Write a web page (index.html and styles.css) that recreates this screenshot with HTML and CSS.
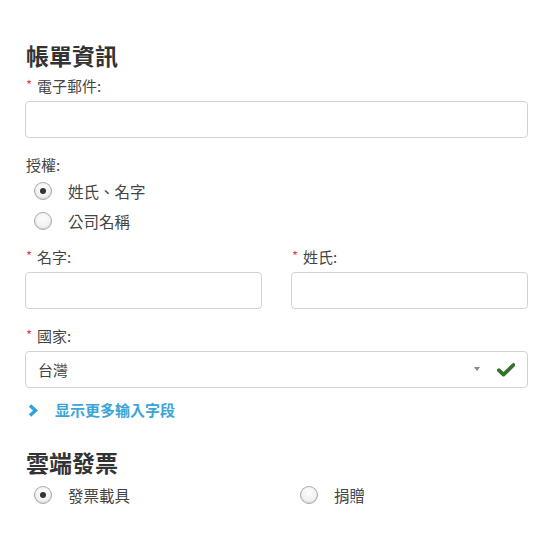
FILE: index.html
```html
<!DOCTYPE html>
<html lang="zh-Hant">
<head>
<meta charset="utf-8">
<link rel="stylesheet" href="styles.css">
</head>
<body>
<form class="checkout">
  <h2 class="section-title title-billing">帳單資訊</h2>
  <div class="field">
    <label class="field-label"><span class="req">*</span>電子郵件:</label>
    <div class="text-input"></div>
  </div>

  <div class="field field-auth">
    <div class="field-label">授權:</div>
    <div class="radio-row"><span class="radio checked"></span><span class="radio-text">姓氏、名字</span></div>
    <div class="radio-row"><span class="radio"></span><span class="radio-text">公司名稱</span></div>
  </div>

  <div class="two-col names">
    <div class="field">
      <label class="field-label"><span class="req">*</span>名字:</label>
      <div class="text-input"></div>
    </div>
    <div class="field">
      <label class="field-label"><span class="req">*</span>姓氏:</label>
      <div class="text-input"></div>
    </div>
  </div>

  <div class="field field-country">
    <label class="field-label"><span class="req">*</span>國家:</label>
    <div class="text-input select">
      <span class="select-value">台灣</span>
      <span class="caret"></span>
      <svg class="check" width="18" height="14" viewBox="0 0 18 14"><path d="M1.8 7.2 L6.5 11.6 L16.4 2" fill="none" stroke="#37702a" stroke-width="3.8" stroke-linecap="round" stroke-linejoin="round"/></svg>
    </div>
  </div>

  <a class="more-link">
    <svg class="chev" width="10" height="13" viewBox="0 0 10 13"><path d="M2 1.5 L7.5 6.5 L2 11.5" fill="none" stroke="#2ea3d8" stroke-width="3.4"/></svg>
    <span>显示更多输入字段</span>
  </a>

  <h2 class="section-title title-invoice">雲端發票</h2>
  <div class="two-col invoice">
    <div class="radio-row"><span class="radio checked"></span><span class="radio-text">發票載具</span></div>
    <div class="radio-row"><span class="radio"></span><span class="radio-text">捐贈</span></div>
  </div>
</form>
</body>
</html>
```
FILE: styles.css
```css
* { box-sizing: border-box; }
html, body { margin: 0; padding: 0; background: #fff; }
body {
  font-family: "Noto Sans CJK TC", "Noto Sans", sans-serif;
  color: #444;
  font-size: 15px;
}
.checkout {
  width: 550px;
  padding: 0 22px 40px 25px;
  display: flex;
  flex-direction: column;
}
.section-title {
  margin: 0;
  font-size: 23px;
  line-height: 30px;
  font-weight: 700;
  color: #333;
  padding-left: 1px;
}
.title-billing { margin-top: 40px; }
.title-invoice { margin-top: 27px; }

.field { display: flex; flex-direction: column; }
.title-billing + .field { margin-top: 6px; }
.field-label {
  display: block;
  line-height: 20px;
  font-size: 15px;
  color: #444;
  padding-left: 1px;
}
.req {
  color: #e8434a;
  font-size: 13px;
  margin-right: 5px;
  vertical-align: top;
  position: relative;
  top: -1px;
}
.text-input {
  margin-top: 5px;
  height: 37px;
  border: 1px solid #d2d2d2;
  border-radius: 4px;
  background: #fff;
}
.field-auth { margin-top: 17px; }
.radio-row {
  display: flex;
  align-items: center;
  height: 30px;
}
.field-auth .field-label + .radio-row { margin-top: 1px; }
.radio {
  width: 18px;
  height: 18px;
  border-radius: 50%;
  border: 1px solid #a9a9a9;
  background: radial-gradient(circle at 50% 35%, #fdfdfd 0%, #f2f2f2 55%, #dcdcdc 100%);
  box-shadow: inset 0 -1px 1px rgba(0,0,0,0.06);
  margin-left: 9px;
  margin-right: 16px;
  display: flex;
  align-items: center;
  justify-content: center;
}
.radio.checked::after {
  content: "";
  width: 6px;
  height: 6px;
  border-radius: 50%;
  background: #333;
}
.radio-text { font-size: 15.5px; color: #444; }

.two-col {
  display: grid;
  grid-template-columns: 1fr 1fr;
  column-gap: 29px;
}
.names { margin-top: 11px; }
.field-country { margin-top: 17px; }

.select {
  display: flex;
  align-items: center;
  padding: 0 12px 0 12px;
}
.select-value { flex: 1; font-size: 15px; color: #444; }
.caret {
  width: 0; height: 0;
  border-left: 3px solid transparent;
  border-right: 3px solid transparent;
  border-top: 4px solid #888;
  margin-right: 17px;
  margin-top: -2px;
}
.check { display: block; margin-top: 1px; }

.more-link {
  margin-top: 12px;
  display: flex;
  align-items: center;
  line-height: 20px;
  color: #3ba4d6;
  font-weight: 700;
  font-size: 15px;
  text-decoration: none;
}
.chev { margin-left: 3px; margin-right: 17px; }

.invoice { margin-top: 3px; }
```
